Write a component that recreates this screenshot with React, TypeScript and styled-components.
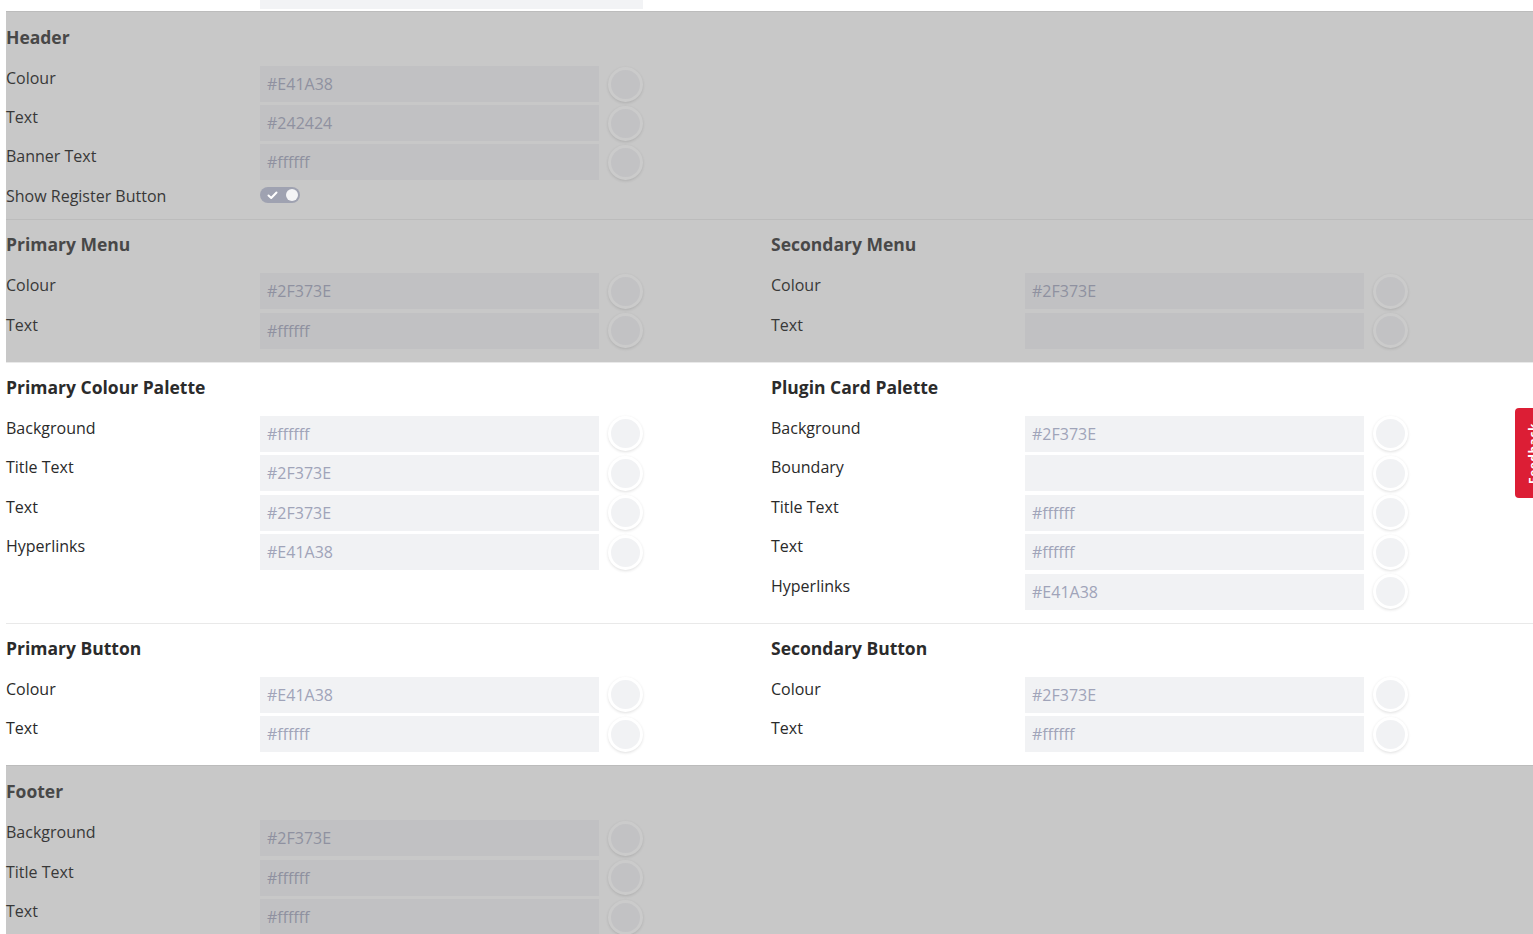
import React from "react";
import styled, { createGlobalStyle, css } from "styled-components";

const Global = createGlobalStyle`
  html, body { margin: 0; padding: 0; background: #ffffff; }
  body { font-family: "Open Sans", "Noto Sans", sans-serif; overflow: hidden; }
  * { box-sizing: border-box; }
`;

const Page = styled.div`
  padding-left: 6px;
  width: 1533px;
`;

const TopStrip = styled.div`
  height: 11px;
  padding-left: 254px;
`;

const TopField = styled.div`
  width: 383px;
  height: 9px;
  background: #f2f3f5;
`;

const Section = styled.section<{ $dim?: boolean; $top?: number; $bottom?: number }>`
  --title: #2b2b2b;
  --label: #2a2a2a;
  --field-bg: #f1f2f4;
  --field-text: #a0a4b9;
  --swatch-bg: #f1f2f4;
  --swatch-border: #ffffff;
  background: #ffffff;
  border-top: 1px solid #e9e9e9;
  padding: ${(p) => p.$top ?? 12}px 0 ${(p) => p.$bottom ?? 13}px 0;
  ${(p) =>
    p.$dim &&
    css`
      --title: #484848;
      --label: #383838;
      --field-bg: #c1c1c3;
      --field-text: #8f91a0;
      --swatch-bg: #c2c2c4;
      --swatch-border: #cbcbcb;
      background: #c8c8c8;
      border-top-color: #bcbcbc;
    `}
`;

const Columns = styled.div`
  display: grid;
  grid-template-columns: 765px 1fr;
`;

const Group = styled.div`
  display: flex;
  flex-direction: column;
`;

const Title = styled.h3`
  margin: 0 0 17px 0;
  font-size: 17.5px;
  line-height: 24px;
  font-weight: 700;
  color: var(--title);
`;

const Rows = styled.div<{ $gap?: number }>`
  display: flex;
  flex-direction: column;
  gap: ${(p) => p.$gap ?? 3.5}px;
`;

const Row = styled.div<{ $short?: boolean }>`
  display: flex;
  align-items: flex-start;
  height: ${(p) => (p.$short ? "24px" : "36px")};
  margin-top: ${(p) => (p.$short ? "1px" : "0")};
`;

const Label = styled.div`
  width: 254px;
  flex: none;
  font-size: 16px;
  line-height: 24px;
  color: var(--label);
`;

const Field = styled.div`
  width: 339px;
  height: 36px;
  background: var(--field-bg);
  color: var(--field-text);
  font-size: 16px;
  line-height: 36px;
  padding-left: 7px;
`;

const Swatch = styled.div`
  width: 35px;
  height: 35px;
  margin: 0.5px 0 0 9px;
  border-radius: 50%;
  background: var(--swatch-bg);
  border: 3px solid var(--swatch-border);
  box-shadow: 0 1px 3px rgba(0, 0, 0, 0.12);
`;

const Toggle = styled.div`
  margin-top: 3px;
  width: 40px;
  height: 16px;
  border-radius: 8px;
  background: #9fa2b1;
  display: flex;
  align-items: center;
  justify-content: space-between;
  padding: 0 2px 0 7px;
`;

const Knob = styled.div`
  width: 12px;
  height: 12px;
  border-radius: 50%;
  background: #f4f4f6;
`;

const Tab = styled.div`
  position: fixed;
  right: -18px;
  top: 408px;
  width: 36px;
  height: 90px;
  background: #dc1e35;
  border-radius: 4px;
  display: flex;
  align-items: center;
  justify-content: center;
  overflow: hidden;
`;

const TabText = styled.span`
  transform: rotate(-90deg);
  color: #ffffff;
  font-size: 12px;
  font-weight: 700;
  white-space: nowrap;
  letter-spacing: 0.5px;
`;

type Item = { label: string; value: string };

const ColorRow = ({ label, value }: Item) => (
  <Row>
    <Label>{label}</Label>
    <Field>{value}</Field>
    <Swatch />
  </Row>
);

const Block = ({
  title,
  items,
  gap,
  children,
}: {
  title: string;
  items: Item[];
  gap?: number;
  children?: React.ReactNode;
}) => (
  <Group>
    <Title>{title}</Title>
    <Rows $gap={gap}>
      {items.map((it) => (
        <ColorRow key={it.label} {...it} />
      ))}
      {children}
    </Rows>
  </Group>
);

export default function App() {
  return (
    <Page>
      <Global />
      <TopStrip>
        <TopField />
      </TopStrip>
      <Section $dim $top={13} $bottom={11}>
        <Block
          title="Header"
          gap={3}
          items={[
            { label: "Colour", value: "#E41A38" },
            { label: "Text", value: "#242424" },
            { label: "Banner Text", value: "#ffffff" },
          ]}
        >
          <Row $short>
            <Label>Show Register Button</Label>
            <Toggle>
              <svg width="11" height="9" viewBox="0 0 11 9">
                <path d="M1.5 4.5 L4.2 7 L9.5 1.5" fill="none" stroke="#ffffff" strokeWidth="2" strokeLinecap="round" strokeLinejoin="round" />
              </svg>
              <Knob />
            </Toggle>
          </Row>
        </Block>
      </Section>
      <Section $dim>
        <Columns>
          <Block
            title="Primary Menu"
            items={[
              { label: "Colour", value: "#2F373E" },
              { label: "Text", value: "#ffffff" },
            ]}
          />
          <Block
            title="Secondary Menu"
            items={[
              { label: "Colour", value: "#2F373E" },
              { label: "Text", value: "" },
            ]}
          />
        </Columns>
      </Section>
      <Section>
        <Columns>
          <Block
            title="Primary Colour Palette"
            items={[
              { label: "Background", value: "#ffffff" },
              { label: "Title Text", value: "#2F373E" },
              { label: "Text", value: "#2F373E" },
              { label: "Hyperlinks", value: "#E41A38" },
            ]}
          />
          <Block
            title="Plugin Card Palette"
            items={[
              { label: "Background", value: "#2F373E" },
              { label: "Boundary", value: "" },
              { label: "Title Text", value: "#ffffff" },
              { label: "Text", value: "#ffffff" },
              { label: "Hyperlinks", value: "#E41A38" },
            ]}
          />
        </Columns>
      </Section>
      <Section>
        <Columns>
          <Block
            title="Primary Button"
            items={[
              { label: "Colour", value: "#E41A38" },
              { label: "Text", value: "#ffffff" },
            ]}
          />
          <Block
            title="Secondary Button"
            items={[
              { label: "Colour", value: "#2F373E" },
              { label: "Text", value: "#ffffff" },
            ]}
          />
        </Columns>
      </Section>
      <Section $dim $top={13}>
        <Block
          title="Footer"
          items={[
            { label: "Background", value: "#2F373E" },
            { label: "Title Text", value: "#ffffff" },
            { label: "Text", value: "#ffffff" },
          ]}
        />
      </Section>
      <Tab>
        <TabText>Feedback</TabText>
      </Tab>
    </Page>
  );
}
